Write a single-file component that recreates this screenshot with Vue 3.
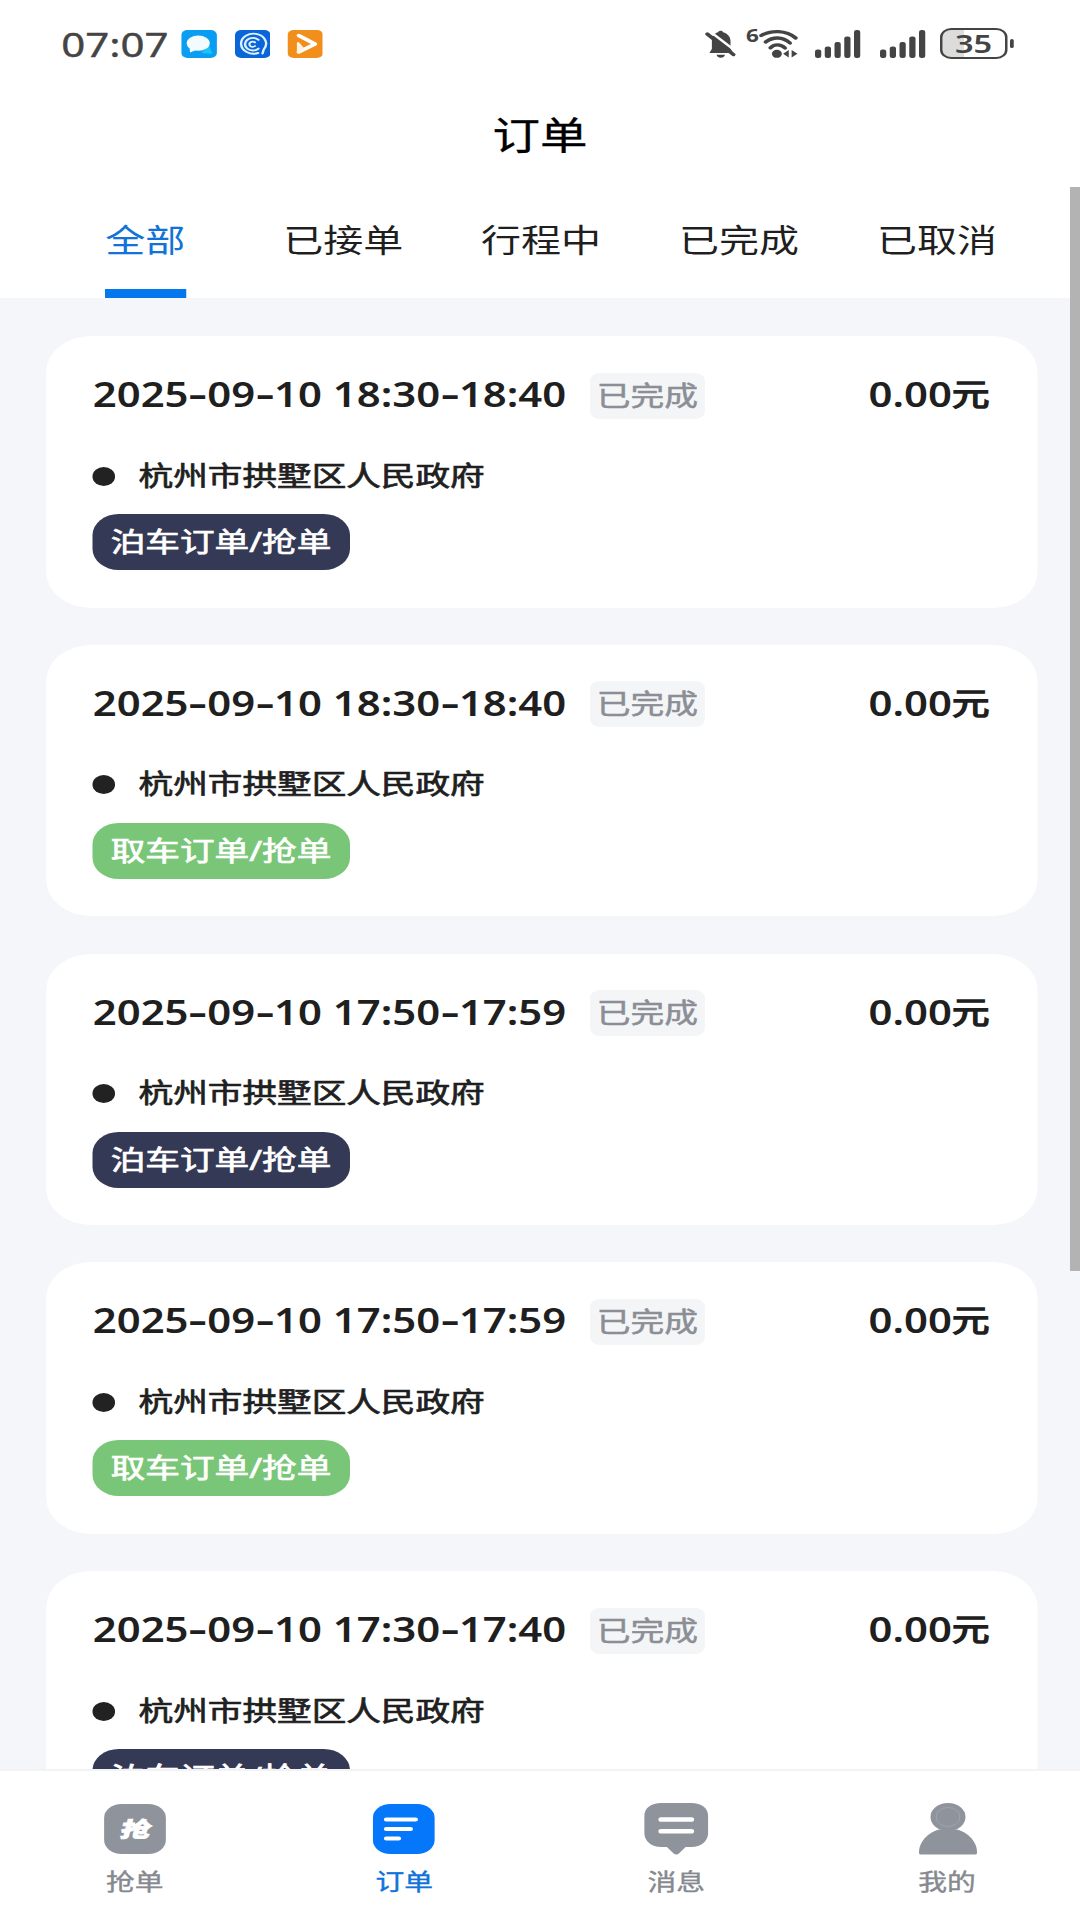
<template>
  <div class="screen">
    <header class="status-bar">
      <span class="clock">07:07</span>
      <div class="apps">
        <svg width="28.5" height="28" viewBox="0 0 28.5 28">
          <rect width="28.5" height="28" rx="5" fill="#0a9df2" />
          <path d="M22 15 L25 24 L16 23 Z" fill="#19c3f7" />
          <ellipse cx="13.6" cy="13.2" rx="9.2" ry="7.6" fill="#f2fbff" />
          <path d="M6.6 16 L7 22.5 L13 19.5 Z" fill="#f2fbff" />
        </svg>
        <svg width="28.5" height="28" viewBox="0 0 28.5 28">
          <rect width="28.5" height="28" rx="5" fill="#0a66d8" />
          <g fill="none" stroke="#dff1ff" stroke-linecap="round">
            <path d="M18.5 23 A10 10 0 1 1 23 19.5 L22 23.5" stroke-width="1.9" />
            <path d="M18.8 9.8 A6.3 6.3 0 1 0 18.8 18.6" stroke-width="1.9" />
            <path d="M16 12.4 A2.6 2.6 0 1 0 16 16" stroke-width="1.7" />
          </g>
        </svg>
        <svg width="28.5" height="28" viewBox="0 0 28.5 28">
          <rect width="28.5" height="28" rx="5" fill="#f28f1c" />
          <path d="M9 5.5 L22 14 L9 22" fill="none" stroke="#fff" stroke-width="3.4" stroke-linecap="round" stroke-linejoin="round" />
          <path d="M8.5 13 L12 18 L8.5 22 Z" fill="#fff3df" stroke="#fff3df" stroke-width="2" stroke-linejoin="round" />
        </svg>
      </div>

      <div class="system">
        <svg class="bell" width="25" height="30" viewBox="0 0 25 30">
          <path d="M3.5 24 L5.5 20 V12 C5.5 7 8 4 10.5 3.3 C11 1.3 14 1.3 14.5 3.3 C18 4.5 20.4 8 20.4 12 V19.5 L22.5 24 Z" fill="#444" />
          <path d="M9.2 25.8 H16 C15.4 29.6 9.8 29.6 9.2 25.8 Z" fill="#444" />
          <path d="M4 2.5 L25 22.5" stroke="#fff" stroke-width="2.4" />
          <path d="M1.8 5 L22.8 25.6" stroke="#444" stroke-width="3.2" stroke-linecap="round" />
        </svg>
        <span class="wifi-gen">6</span>
        <svg class="wifi" width="32" height="30" viewBox="0 0 32 30">
          <g fill="none" stroke="#444" stroke-width="3.3" stroke-linecap="round">
            <path d="M2 6.5 C10 1 22 1 29.5 9" />
            <path d="M5.5 13 C11.5 7.5 19 7.5 25 14" />
            <path d="M9.3 18.8 C12.6 15 17.5 15 21 19" />
          </g>
          <circle cx="14.5" cy="24.8" r="4" fill="#444" />
          <path d="M24 21 V28.5 L19.5 24.7 Z M26.3 21 L31 24.7 L26.3 28.5 Z" fill="#444" />
        </svg>
        <svg v-for="n in 2" :key="n" class="signal" width="36.5" height="28" viewBox="0 0 36.5 28">
          <rect
            v-for="(h, i) in bars"
            :key="h"
            :x="i * 7.8"
            :y="28 - h"
            width="5"
            :height="h"
            rx="2"
            fill="#444"
          />
        </svg>
        <div class="battery">35</div>
        <i class="battery-tip"></i>
      </div>
    </header>

    <h1 class="title">订单</h1>

    <nav class="tabs">
      <button
        v-for="tab in tabs"
        :key="tab"
        class="tab"
        :class="{ active: tab === activeTab }"
        @click="activeTab = tab"
      >
        <span>{{ tab }}</span>
      </button>
    </nav>

    <main class="list">
      <section v-for="(order, index) in orders" :key="index" class="card">
        <div class="card-head">
          <span class="time"><span
            v-for="(part, i) in splitTime(order.time)"
            :key="i"
            :class="{ dash: part === '-' }"
          >{{ part }}</span></span>
          <span class="state">已完成</span>
          <span class="price">0.00<b>元</b></span>
        </div>
        <div class="address">
          <i class="dot"></i>
          <span>杭州市拱墅区人民政府</span>
        </div>
        <div class="badge" :class="order.type">{{ typeNames[order.type] }}订单/抢单</div>
      </section>
    </main>

    <footer class="nav">
      <div class="nav-item">
        <svg width="50" height="54" viewBox="0 0 50 54">
          <rect x="0.3" y="2" width="49.4" height="50" rx="14" fill="#8f939c" />
          <text class="grab" x="0" y="0" transform="translate(12.3 35) scale(1.15 1) skewX(-10)">抢</text>
        </svg>
        <span>抢单</span>
      </div>
      <div class="nav-item active">
        <svg width="50" height="54" viewBox="0 0 50 54">
          <rect x="0.3" y="2" width="49.4" height="50" rx="14" fill="#0577fb" />
          <path d="M11 17.5 H34.5 M11 27 H30.5 M11 36.5 H21" stroke="#fff" stroke-width="3.8" stroke-linecap="round" />
        </svg>
        <span>订单</span>
      </div>
      <div class="nav-item">
        <svg width="52" height="54" viewBox="0 0 52 54">
          <path d="M14 1 H38 C46 1 51.5 6 51.5 14 V31 C51.5 39 46 45 38 45 H33.5 L28.5 51 Q26 54 23.5 51 L18.5 45 H14 C6 45 0.5 39 0.5 31 V14 C0.5 6 6 1 14 1 Z" fill="#8f939c" />
          <path d="M14 17.5 H38 M14 29.2 H38" stroke="#fff" stroke-width="4.6" stroke-linecap="round" />
        </svg>
        <span>消息</span>
      </div>
      <div class="nav-item">
        <svg width="50" height="54" viewBox="0 0 50 54">
          <ellipse cx="25.4" cy="15" rx="14" ry="14" fill="#8f939c" />
          <circle cx="25.4" cy="15" r="9.5" fill="none" stroke="#a5a8af" stroke-width="0.7" />
          <path d="M18 27.5 H32.8 C42 31 48.6 40 48.6 50 V51 Q48.6 52.6 47 52.6 H4 Q2.2 52.6 2.2 51 V50 C2.2 40 9 31 18 27.5 Z" fill="#8f939c" />
        </svg>
        <span>我的</span>
      </div>
    </footer>

    <div class="scrollbar"></div>
  </div>
</template>

<script setup>
import { ref } from 'vue';

const bars = [8.5, 11.5, 16, 21.5, 28];

const tabs = ['全部', '已接单', '行程中', '已完成', '已取消'];
const activeTab = ref('全部');

const typeNames = { park: '泊车', pickup: '取车' };

const orders = [
  { time: '2025-09-10 18:30-18:40', type: 'park' },
  { time: '2025-09-10 18:30-18:40', type: 'pickup' },
  { time: '2025-09-10 17:50-17:59', type: 'park' },
  { time: '2025-09-10 17:50-17:59', type: 'pickup' },
  { time: '2025-09-10 17:30-17:40', type: 'park' }
];

// keeps the dashes as their own parts so they can be drawn wider
function splitTime(time) {
  return time.split(/(-)/);
}
</script>

<style>
body {
  margin: 0;
  overflow: hidden;
  background: #fff;
}
</style>

<style scoped>
/* laid out 864px wide, then stretched to the full 1080px */
.screen {
  position: relative;
  display: flex;
  flex-direction: column;
  width: 864px;
  height: 1920px;
  overflow: hidden;
  background: #fff;
  color: #1f1f1f;
  font-family: 'Noto Sans', 'Noto Sans CJK SC', sans-serif;
  transform: scaleX(1.25);
  transform-origin: 0 0;
}

.status-bar {
  display: flex;
  align-items: center;
  height: 87px;
  margin-bottom: 1px;
  padding: 0 53.2px 0 49px;
  box-sizing: border-box;
  color: #444;
}

.clock {
  width: 96.4px;
  font-size: 33.6px;
  line-height: 40px;
  -webkit-text-stroke: 0.4px;
}

.apps {
  display: flex;
  gap: 13.7px;
}

.system {
  display: flex;
  align-items: center;
  margin-left: auto;
}

.wifi-gen {
  margin: -18px 0 0 7.5px;
  font-size: 18px;
  font-weight: 700;
  line-height: 20px;
}

.wifi {
  margin-right: 13.4px;
}

.signal {
  margin-right: 15.5px;
}

.signal + .battery {
  margin-left: -4.6px;
}

.battery {
  width: 54px;
  height: 31px;
  box-sizing: border-box;
  border: 2.5px solid #444;
  border-radius: 9px;
  background: linear-gradient(90deg, #dcdcdc 35%, #fff 35%);
  font-size: 26px;
  font-weight: 600;
  line-height: 26px;
  text-align: center;
}

.battery-tip {
  width: 3px;
  height: 9px;
  margin-left: 2px;
  border-radius: 2px;
  background: #444;
}

.title {
  height: 94px;
  margin: 0;
  color: #000;
  font-size: 38px;
  font-weight: 400;
  line-height: 92px;
  text-align: center;
  -webkit-text-stroke: 0.3px;
}

.tabs {
  display: flex;
  height: 116px;
  padding: 0 35.2px 0 37px;
}

.tab {
  display: flex;
  flex: 1;
  justify-content: center;
  padding: 0;
  border: none;
  background: none;
  color: #1f1f1f;
  font-family: inherit;
  font-size: 32px;
  line-height: 115px;
  cursor: pointer;
}

.tab span {
  height: 107px;
}

.tab.active {
  color: #1173d8;
}

.tab.active span {
  padding: 0 0.5px;
  border-bottom: 9px solid #0577ee;
}

.list {
  flex: 1;
  min-height: 0;
  padding: 38px 34.4px 0 37.4px;
  overflow: hidden;
  background: #f5f6fa;
}

.card {
  height: 271.6px;
  margin-bottom: 37.2px;
  padding: 36px 38px 0 36.4px;
  box-sizing: border-box;
  border-radius: 36px;
  background: #fff;
}

.card-head {
  display: flex;
  align-items: center;
  height: 47px;
}

.time {
  width: 382.6px;
  font-size: 33.5px;
  font-weight: 600;
  line-height: 47px;
  white-space: pre;
  transform: translate(0.4px, -1px);
}

.dash {
  display: inline-block;
  width: 15px;
  text-align: center;
  transform: translate(0.3px, -1px) scaleX(1.4);
}

.state {
  margin-left: 15.5px;
  padding: 0 5.5px;
  border-radius: 8px;
  background: #f4f5f7;
  color: #8b8e95;
  font-size: 27px;
  line-height: 45px;
  padding-bottom: 1px;
  -webkit-text-stroke: 0.5px;
}

.price {
  margin-left: auto;
  font-size: 33.5px;
  font-weight: 600;
  line-height: 47px;
  transform: translateY(-1px);
}

.price b {
  display: inline-block;
  font-size: 30px;
  font-weight: 400;
  line-height: 1;
  transform: translateY(-2px);
  -webkit-text-stroke: 1.4px;
}

.address {
  display: flex;
  align-items: center;
  height: 40px;
  margin-top: 37px;
  font-size: 27.7px;
  line-height: 40px;
  -webkit-text-stroke: 0.7px;
}

.address span {
  margin-top: -3px;
}

.dot {
  width: 18.5px;
  height: 19px;
  margin-right: 18.6px;
  border-radius: 50%;
  background: #222;
}

.badge {
  width: 206px;
  height: 56px;
  margin-top: 18px;
  border-radius: 21px;
  color: #fff;
  font-size: 27.7px;
  line-height: 54px;
  text-align: center;
  -webkit-text-stroke: 0.7px;
}

.badge.park {
  background: #343956;
}

.badge.pickup {
  background: #7ac678;
}

.nav {
  display: flex;
  height: 151px;
  box-sizing: border-box;
  border-top: 2px solid #f3f3f6;
  background: #fff;
}

.nav-item {
  display: flex;
  flex: 1;
  flex-direction: column;
  align-items: center;
  padding: 31px 0 0 1.5px;
  color: #86898f;
  font-size: 23px;
  line-height: 30px;
  -webkit-text-stroke: 0.4px;
}

.nav-item:first-child svg {
  margin-left: 1px;
}

.nav-item:nth-child(2) {
  padding-left: 3px;
}

.nav-item:nth-child(3) {
  padding-left: 5px;
}

.nav-item:nth-child(4) {
  padding-left: 4px;
}

.nav-item span {
  margin-top: 10px;
}

.nav-item.active {
  color: #1173d8;
}

.grab {
  fill: #fff;
  stroke: #fff;
  stroke-width: 0.8px;
  font-size: 21px;
  font-weight: 900;
}

.scrollbar {
  position: absolute;
  top: 187px;
  right: 0;
  width: 8px;
  height: 1084px;
  background: #b3b3b3;
}
</style>
